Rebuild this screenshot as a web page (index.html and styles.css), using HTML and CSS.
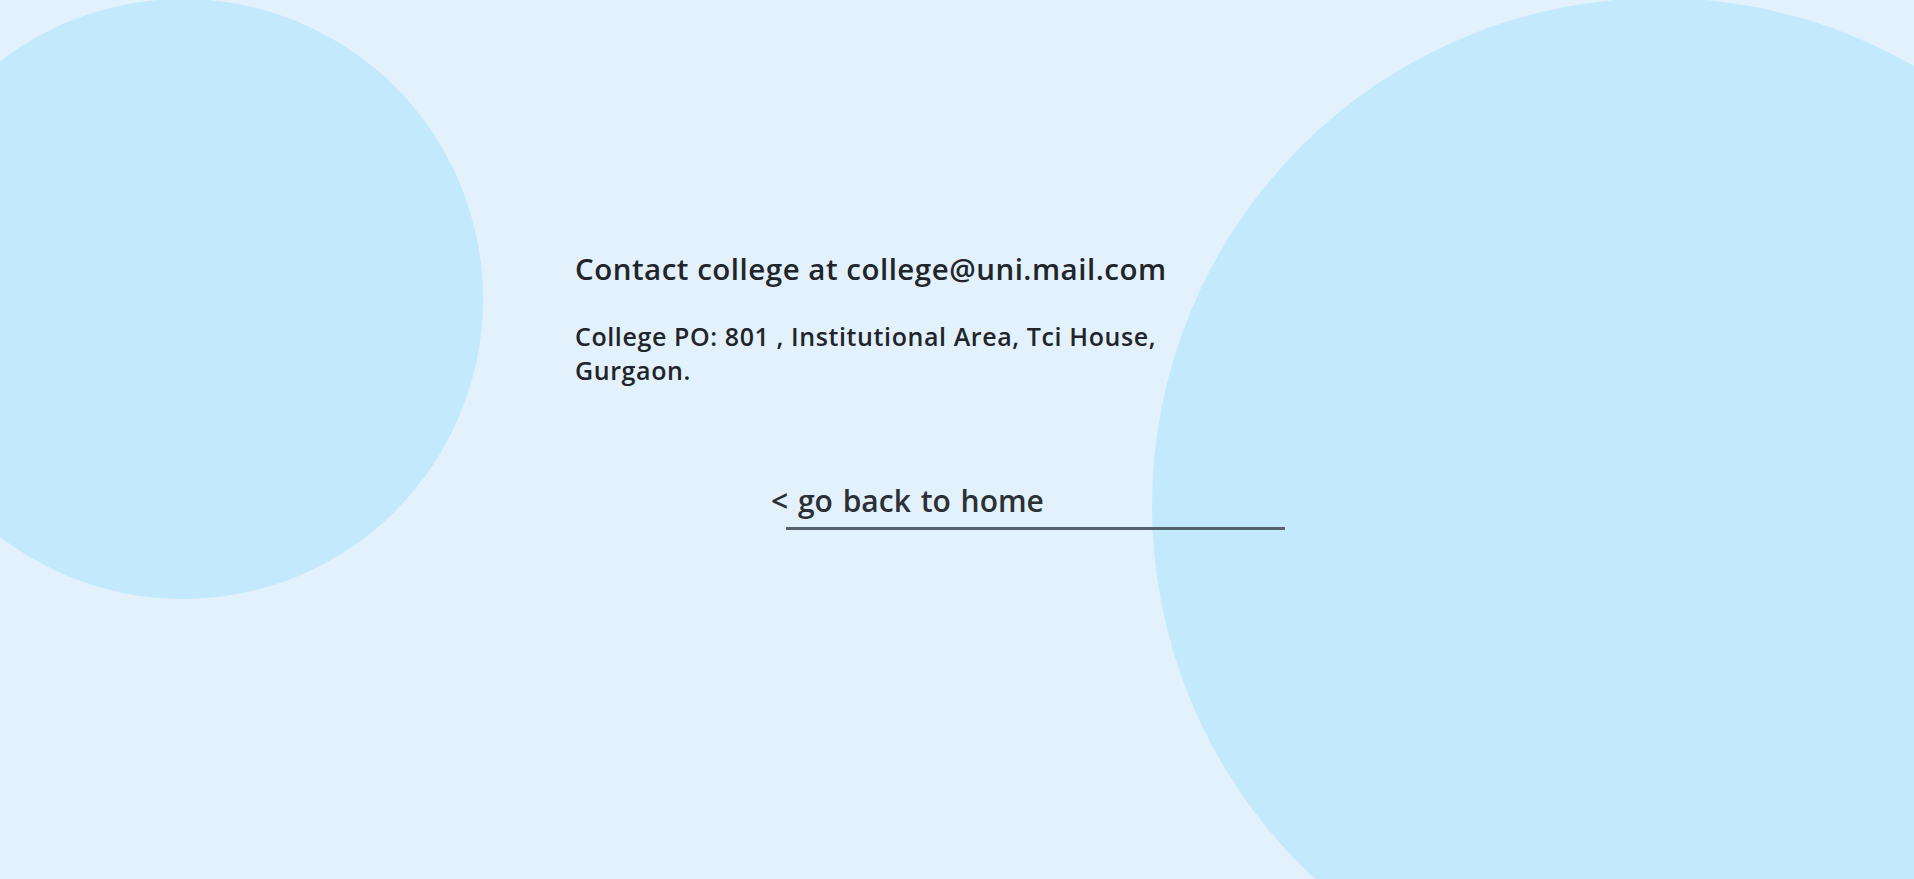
FILE: index.html
```html
<!DOCTYPE html>
<html lang="en">
<head>
<meta charset="utf-8">
<title>Contact</title>
<link rel="stylesheet" href="styles.css">
</head>
<body>
<div class="page">
  <div class="circle circle-left"></div>
  <div class="circle circle-right"></div>
  <main class="content">
    <h4 class="contact-title">Contact college at college@uni.mail.com</h4>
    <h5 class="contact-address">College PO: 801 , Institutional Area, Tci House, Gurgaon.</h5>
    <div class="back">
      <a class="back-link" href="#">&lt; go back to home</a>
      <div class="back-line"></div>
    </div>
  </main>
</div>
</body>
</html>
```

FILE: styles.css
```css
html, body {
  margin: 0;
  padding: 0;
}
body {
  background: #e2f1fc;
  font-family: "Open Sans", "Noto Sans", sans-serif;
  color: #212529;
  overflow: hidden;
}
.page {
  position: relative;
  height: 879px;
  overflow: hidden;
}
.circle {
  position: absolute;
  border-radius: 50%;
  background: #c3e9fc;
}
.circle-left {
  width: 600px;
  height: 600px;
  left: -117px;
  top: -1px;
}
.circle-right {
  width: 1016px;
  height: 1016px;
  left: 1152px;
  top: -2px;
}
.content {
  position: relative;
  display: flex;
  flex-direction: column;
  align-items: flex-start;
  padding: 251px 0 0 575px;
  width: 640px;
}
.contact-title {
  margin: 0;
  font-size: 29.5px;
  line-height: 36px;
  font-weight: 600;
  white-space: nowrap;
  letter-spacing: 0.5px;
}
.contact-address {
  margin: 32px 0 0;
  font-size: 25px;
  line-height: 34px;
  font-weight: 600;
  letter-spacing: 0.6px;
}
.back {
  display: flex;
  flex-direction: column;
  align-items: flex-start;
  margin: 95px 0 0 196px;
}
.back-link {
  font-size: 30px;
  line-height: 37px;
  font-weight: 600;
  letter-spacing: 0;
  word-spacing: 2px;
  color: #2b3035;
  text-decoration: none;
}
.back-line {
  width: 499px;
  height: 3px;
  margin: 8px 0 0 15px;
  background: #56616b;
}
```
